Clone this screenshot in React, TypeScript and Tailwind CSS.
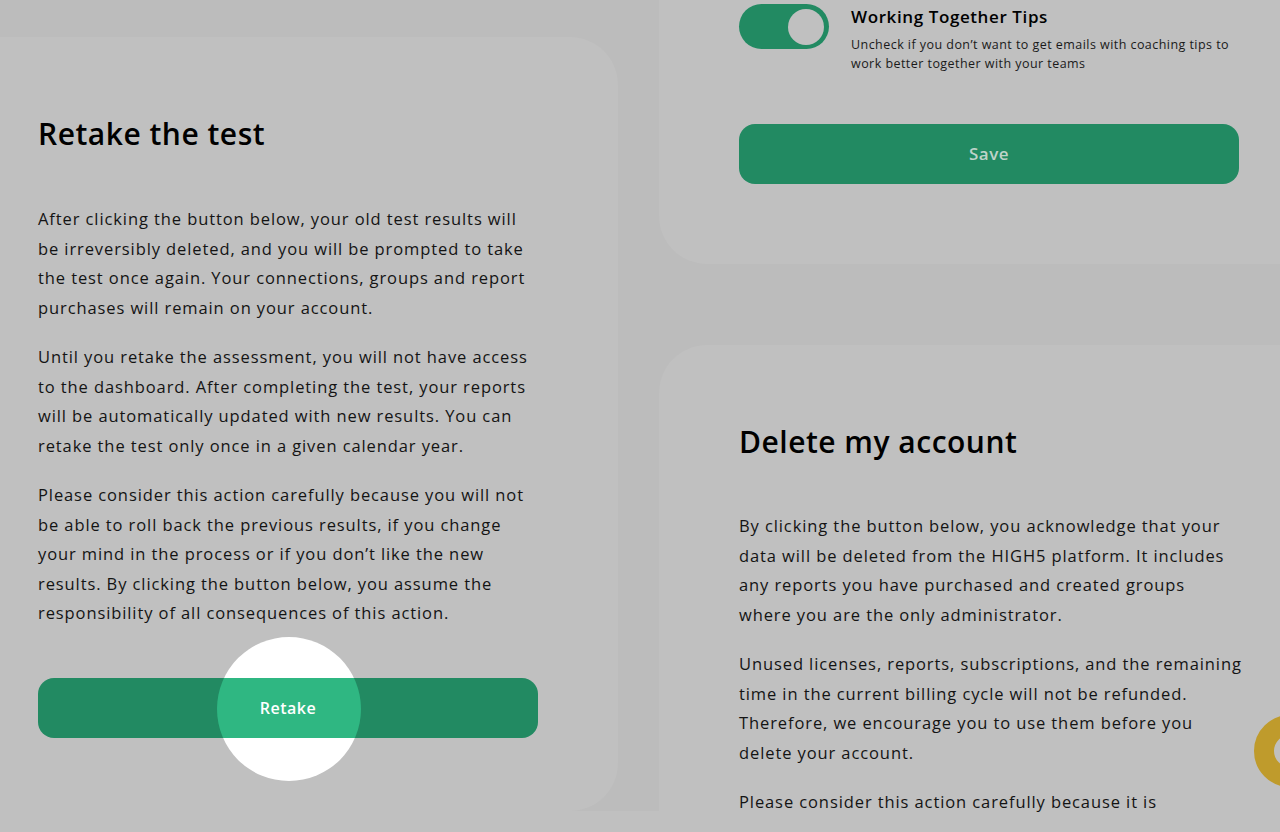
import React from "react";

const font = { fontFamily: "'Open Sans', 'Noto Sans', sans-serif" };

function Lines({ lines }: { lines: string[] }) {
  return (
    <p className="mb-[19.6px] text-[16.5px] leading-[29.6px] tracking-[0.9px] text-[#141414]">
      {lines.map((l, i) => (
        <span key={i} className="block whitespace-nowrap">
          {l}
        </span>
      ))}
    </p>
  );
}

export default function App() {
  return (
    <div
      className="relative flex h-[832px] w-[1280px] overflow-hidden bg-[#c0c0c0]"
      style={font}
    >
      {/* Left column */}
      <div className="flex w-[659px] shrink-0 flex-col">
        <div className="h-[811px] bg-[#bcbcbc] pr-[41px] pt-[37px]">
          <div className="relative h-full rounded-r-[48px] bg-[#c0c0c0] px-[38px] pt-[78px]">
            <h1 className="text-[30px] font-semibold leading-[38px] tracking-[0.5px] text-black">
              Retake the test
            </h1>
            <div className="mt-[51px]">
              <Lines
                lines={[
                  "After clicking the button below, your old test results will",
                  "be irreversibly deleted, and you will be prompted to take",
                  "the test once again. Your connections, groups and report",
                  "purchases will remain on your account.",
                ]}
              />
              <Lines
                lines={[
                  "Until you retake the assessment, you will not have access",
                  "to the dashboard. After completing the test, your reports",
                  "will be automatically updated with new results. You can",
                  "retake the test only once in a given calendar year.",
                ]}
              />
              <Lines
                lines={[
                  "Please consider this action carefully because you will not",
                  "be able to roll back the previous results, if you change",
                  "your mind in the process or if you don\u2019t like the new",
                  "results. By clicking the button below, you assume the",
                  "responsibility of all consequences of this action.",
                ]}
              />
            </div>
            <div className="relative mt-[50px] w-[500px]">
              <div className="absolute left-[179px] top-[-41px] h-[144px] w-[144px] rounded-full bg-white" />
              <button className="relative flex h-[60px] w-[500px] items-center justify-center overflow-hidden rounded-[16px] bg-[#228a62]">
                <span className="absolute left-[179px] top-[-41px] h-[144px] w-[144px] rounded-full bg-[#2fb782]" />
                <span className="relative text-[16px] font-semibold tracking-[0.5px] text-white">
                  Retake
                </span>
              </button>
            </div>
          </div>
        </div>
      </div>

      {/* Right column */}
      <div className="flex flex-1 flex-col bg-[#bcbcbc]">
        <div className="h-[264px] shrink-0 rounded-bl-[48px] bg-[#c0c0c0] pl-[80px] pt-[4px]">
          <div className="flex items-start gap-[22px]">
            <div className="flex h-[45px] w-[90px] shrink-0 items-center justify-end rounded-full bg-[#228a62] pr-[5px]">
              <div className="h-[36px] w-[36px] rounded-full bg-[#c0c0c0]" />
            </div>
            <div className="pt-[1px]">
              <div className="text-[17px] font-semibold leading-[24px] tracking-[0.6px] text-black">
                Working Together Tips
              </div>
              <div className="mt-[6px] text-[12.5px] leading-[19px] tracking-[0.45px] text-[#1a1a1a]">
                <span className="block whitespace-nowrap">
                  Uncheck if you don’t want to get emails with coaching tips to
                </span>
                <span className="block whitespace-nowrap">
                  work better together with your teams
                </span>
              </div>
            </div>
          </div>
          <button className="mt-[51px] flex h-[60px] w-[500px] items-center justify-center rounded-[16px] bg-[#228a62] text-[17px] font-semibold tracking-[0.5px] text-[#bfd3c9]">
            Save
          </button>
        </div>
        <div className="h-[81px] shrink-0" />
        <div className="flex-1 rounded-tl-[48px] bg-[#c0c0c0] pl-[80px] pt-[78px]">
          <h2 className="text-[30px] font-semibold leading-[38px] tracking-[0.5px] text-black">
            Delete my account
          </h2>
          <div className="mt-[50px]">
            <Lines
              lines={[
                "By clicking the button below, you acknowledge that your",
                "data will be deleted from the HIGH5 platform. It includes",
                "any reports you have purchased and created groups",
                "where you are the only administrator.",
              ]}
            />
            <Lines
              lines={[
                "Unused licenses, reports, subscriptions, and the remaining",
                "time in the current billing cycle will not be refunded.",
                "Therefore, we encourage you to use them before you",
                "delete your account.",
              ]}
            />
            <Lines
              lines={["Please consider this action carefully because it is", ""]}
            />
          </div>
        </div>
      </div>

      {/* Gold ring badge at the right edge */}
      <div className="absolute left-[1254px] top-[715px] h-[72px] w-[72px] rounded-full border-[20px] border-[#bf9b2c]" />
    </div>
  );
}
